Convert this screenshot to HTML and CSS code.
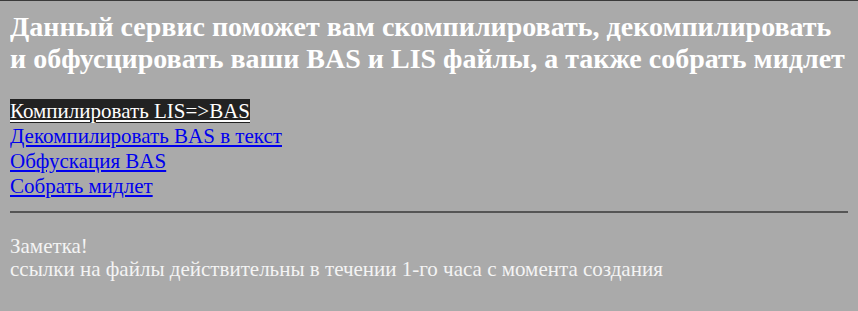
FILE: index.html
```html
<!DOCTYPE html>
<html lang="ru">
<head>
    <meta charset="UTF-8">
    <title>BAS компилятор</title>
    <link rel="stylesheet" href="styles.css">
</head>
<body>
    <h2 class="title">Данный сервис поможет вам скомпилировать, декомпилировать и обфусцировать ваши BAS и LIS файлы, а также собрать мидлет</h2>

    <div class="menu">
        <a href="#" class="active">Компилировать LIS=&gt;BAS</a><br>
        <a href="#">Декомпилировать BAS в текст</a><br>
        <a href="#">Обфускация BAS</a><br>
        <a href="#">Собрать мидлет</a>
    </div>

    <hr class="line">

    <div class="note">
        Заметка!<br>
        ссылки на файлы действительны в течении 1-го часа с момента создания
    </div>
</body>
</html>
```

FILE: styles.css
```css
html {
    background-color: #aaaaaa;
    border-top: 1px solid #3a3a3a;
}
body {
    margin: 10px;
    font-family: "Liberation Serif", "Times New Roman", serif;
    color: #ffffff;
}
.title {
    font-size: 28px;
    line-height: 32px;
    margin: 0 0 24px 0;
}
.menu {
    font-size: 21px;
    line-height: 25px;
}
.menu a {
    color: #0000ee;
}
.menu a.active {
    background-color: #222222;
    color: #ffffff;
}
.line {
    margin: 12px 0 22px 0;
    border: none;
    border-top: 2px solid #555555;
}
.note {
    font-size: 21px;
    line-height: 23px;
    color: #f4f4f4;
}
```
